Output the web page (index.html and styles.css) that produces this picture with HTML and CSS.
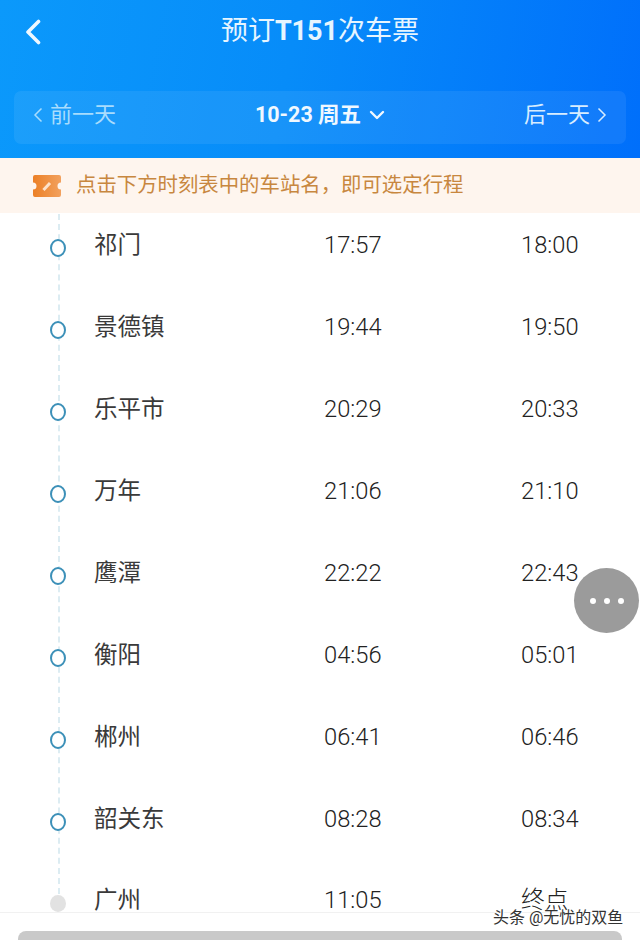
FILE: index.html
```html
<!DOCTYPE html>
<html lang="zh-CN">
<head>
<meta charset="utf-8">
<title>预订T151次车票</title>
<link rel="stylesheet" href="styles.css">
</head>
<body>
<div class="page">
  <header class="header">
    <div class="titlebar">
      <svg class="back" width="18" height="26" viewBox="0 0 18 26"><path d="M14.5 2.5 4 13l10.500 10.500" fill="none" stroke="#eef8ff" stroke-width="3.600" stroke-linecap="round" stroke-linejoin="round"/></svg>
      <h1 class="title">预订<b>T151</b>次车票</h1>
    </div>
    <div class="datebar">
      <div class="daylink">
        <svg width="10" height="16" viewBox="0 0 10 16"><path d="M8.500 1.500 2 8l6.500 6.500" fill="none" stroke="#a8dcfd" stroke-width="1.500"/></svg>
        <span>前一天</span>
      </div>
      <div class="curdate">
        <span>10-23 周五</span>
        <svg width="16" height="10" viewBox="0 0 16 10"><path d="M2 2l6 6 6-6" fill="none" stroke="#f0f8ff" stroke-width="2.400" stroke-linecap="round" stroke-linejoin="round"/></svg>
      </div>
      <div class="daylink next">
        <span>后一天</span>
        <svg width="10" height="16" viewBox="0 0 10 16"><path d="M1.500 1.500 8 8l-6.500 6.500" fill="none" stroke="#d8edff" stroke-width="1.500"/></svg>
      </div>
    </div>
  </header>

  <div class="notice">
    <svg class="ticket" width="28" height="22" viewBox="0 0 28 22">
      <defs><linearGradient id="tk" x1="0" y1="0" x2="1" y2="0"><stop offset="0" stop-color="#ec8026"/><stop offset="1" stop-color="#f2a15e"/></linearGradient></defs>
      <path d="M2 0h24a2 2 0 0 1 2 2v5.500a3.500 3.500 0 0 0 0 7V20a2 2 0 0 1-2 2H2a2 2 0 0 1-2-2v-5.500a3.500 3.500 0 0 0 0-7V2a2 2 0 0 1 2-2z" fill="url(#tk)"/>
      <path d="M10.500 15l6.500-7" stroke="#fde3cb" stroke-width="3"/>
    </svg>
    <span>点击下方时刻表中的车站名，即可选定行程</span>
  </div>

  <main class="list">
    <div class="line"></div>
    <div class="row"><i class="dot"></i><span class="name">祁门</span><span>17:57</span><span>18:00</span></div>
    <div class="row"><i class="dot"></i><span class="name">景德镇</span><span>19:44</span><span>19:50</span></div>
    <div class="row"><i class="dot"></i><span class="name">乐平市</span><span>20:29</span><span>20:33</span></div>
    <div class="row"><i class="dot"></i><span class="name">万年</span><span>21:06</span><span>21:10</span></div>
    <div class="row"><i class="dot"></i><span class="name">鹰潭</span><span>22:22</span><span>22:43</span></div>
    <div class="row"><i class="dot"></i><span class="name">衡阳</span><span>04:56</span><span>05:01</span></div>
    <div class="row"><i class="dot"></i><span class="name">郴州</span><span>06:41</span><span>06:46</span></div>
    <div class="row"><i class="dot"></i><span class="name">韶关东</span><span>08:28</span><span>08:34</span></div>
    <div class="row"><i class="dot end"></i><span class="name">广州</span><span>11:05</span><span>终点</span></div>
  </main>

  <footer class="footer"><div class="action"></div></footer>

  <div class="fab"><i></i><i></i><i></i></div>
  <div class="watermark">头条 @无忧的双鱼</div>
</div>
</body>
</html>
```
FILE: styles.css
```css
* { box-sizing: border-box; }
html, body { margin: 0; padding: 0; }
body {
  background: #fff;
  font-family: Roboto, "Noto Sans CJK SC", sans-serif;
}
.page {
  position: relative;
  width: 640px;
  height: 940px;
  overflow: hidden;
  display: flex;
  flex-direction: column;
}
.header {
  flex: none;
  height: 158px;
  padding: 0 14px;
  background: linear-gradient(100deg, #0b99fb 0%, #078cf9 45%, #006ffb 100%);
  position: relative;
  z-index: 2;
}
.titlebar {
  height: 91px;
  padding-bottom: 29px;
  display: flex;
  align-items: center;
  justify-content: center;
  position: relative;
}
.back { position: absolute; left: 10px; top: 19px; }
.title {
  margin: 0;
  font-size: 27px;
  font-weight: 400;
  color: #e6f5ff;
  line-height: 40px;
}
.title b { font-weight: 700; }
.datebar {
  height: 53px;
  border-radius: 7px;
  background: rgba(255, 255, 255, 0.07);
  display: flex;
  align-items: center;
  justify-content: space-between;
  padding: 0 19px 5px;
}
.daylink {
  display: flex;
  align-items: center;
  gap: 7px;
  font-size: 22px;
  line-height: 30px;
  color: #a8dcfd;
}
.daylink.next { color: #d8edff; }
.curdate {
  display: flex;
  align-items: center;
  gap: 8px;
  font-size: 21.500px;
  line-height: 30px;
  font-weight: 700;
  color: #f0f8ff;
}
.notice {
  flex: none;
  height: 55px;
  padding-left: 33px;
  padding-bottom: 5px;
  display: flex;
  align-items: center;
  gap: 15px;
  background: #fef5ee;
  color: #c8873f;
  font-size: 20.400px;
  position: relative;
  z-index: 2;
}
.ticket { margin-top: 5px; }
.list {
  flex: 1;
  min-height: 0;
  margin-top: -9px;
  position: relative;
  overflow: hidden;
}
.line {
  position: absolute;
  left: 58px;
  top: 0;
  height: 690px;
  border-left: 2px dashed #dcecf2;
}
.row {
  height: 81.950px;
  display: grid;
  grid-template-columns: 324px 197px 1fr;
  align-items: center;
  font-size: 23.700px;
  line-height: 30px;
  font-weight: 300;
  color: #222;
  position: relative;
}
.name {
  margin-left: 94px;
  font-weight: 400;
  font-size: 23.500px;
  color: #3a3a3a;
  white-space: nowrap;
}
.dot {
  position: absolute;
  left: 50px;
  top: 35px;
  width: 16px;
  height: 18px;
  border-radius: 50%;
  border: 2px solid #3c90b8;
  background: #fff;
}
.dot.end {
  border: 0;
  background: #e2e2e2;
  height: 17px;
}
.footer {
  flex: none;
  height: 28px;
  padding: 18px 18px 0;
  background: #fff;
  border-top: 1px solid #f1f1f1;
  position: relative;
  z-index: 2;
}
.action {
  height: 20px;
  border-radius: 8px 8px 0 0;
  background: #c9c9c9;
}
.fab {
  position: absolute;
  left: 574px;
  top: 568px;
  width: 65px;
  height: 65px;
  border-radius: 50%;
  background: #9b9b9b;
  display: flex;
  align-items: center;
  justify-content: center;
  gap: 8px;
  z-index: 3;
}
.fab i {
  width: 6px;
  height: 6px;
  border-radius: 50%;
  background: #fff;
}
.watermark {
  position: absolute;
  left: 493px;
  top: 907px;
  font-size: 16px;
  line-height: 21px;
  color: #333;
  white-space: nowrap;
  text-shadow: 0 0 2px #fff, 0 0 2px #fff, 1px 1px 1px #fff;
  z-index: 4;
}
```
